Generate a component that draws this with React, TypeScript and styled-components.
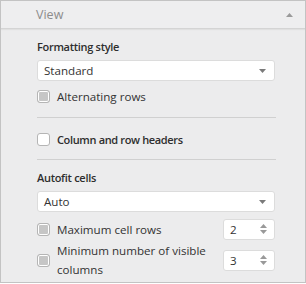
import React from "react";
import styled, { createGlobalStyle } from "styled-components";

const Global = createGlobalStyle`
  html, body { margin: 0; padding: 0; background: #fff; }
  body { font-family: "Open Sans", "Noto Sans", sans-serif; font-size: 11.6px; color: #333; }
`;

const Panel = styled.div`
  width: 306px;
  height: 283px;
  box-sizing: border-box;
  border: 1px solid #c3c3c3;
  background: #ececed;
  display: flex;
  flex-direction: column;
  overflow: hidden;
`;

const Header = styled.div`
  flex: none;
  height: 28px;
  box-sizing: border-box;
  display: flex;
  align-items: center;
  justify-content: space-between;
  padding: 0 12px 0 35px;
  border-bottom: 1px solid #d4d4d4;
  box-shadow: 0 1px 1px rgba(0, 0, 0, 0.05);
  background: #eeeeef;
  color: #8c8c8c;
  font-size: 12.5px;
`;

const Body = styled.div`
  padding: 8px 30px 0 36px;
  display: flex;
  flex-direction: column;
`;

const Section = styled.div<{ $pt?: number; $pb?: number }>`
  display: flex;
  flex-direction: column;
  padding: ${(p) => `${p.$pt ?? 0}px 0 ${p.$pb ?? 0}px`};
`;

const Title = styled.div`
  font-weight: 600;
  font-size: 11px;
  letter-spacing: -0.3px;
  height: 20px;
  line-height: 20px;
  color: #2e2e2e;
`;

const Select = styled.div`
  height: 21px;
  box-sizing: border-box;
  background: #fff;
  border: 1px solid #dcdcdc;
  border-radius: 3px;
  margin-top: 3px;
  display: flex;
  align-items: center;
  justify-content: space-between;
  padding: 0 8px 0 6px;
  color: #333;
`;

const Row = styled.div<{ $h: number; $mt?: number }>`
  display: flex;
  align-items: center;
  min-height: ${(p) => p.$h}px;
  margin-top: ${(p) => p.$mt ?? 0}px;
  gap: 7px;
`;

const Check = styled.span<{ $on?: boolean }>`
  width: 13px;
  height: 13px;
  box-sizing: border-box;
  border: 1px solid #b5b5b5;
  border-radius: 3px;
  background: ${(p) => (p.$on ? "#fff" : "#c6c6c6")};
  box-shadow: inset 0 0 0 1px #fff;
  flex: none;
`;

const Label = styled.span<{ $bold?: boolean }>`
  flex: 1;
  line-height: 19px;
  color: #333;
  ${(p) =>
    p.$bold
      ? "font-weight: 600; font-size: 11px; letter-spacing: -0.35px; color: #2e2e2e;"
      : ""}
`;

const Sep = styled.div`
  height: 1px;
  background: #d0d0d0;
  margin-right: -1px;
`;

const Spin = styled.div`
  width: 52px;
  height: 21px;
  box-sizing: border-box;
  background: #fff;
  border: 1px solid #dcdcdc;
  border-radius: 3px;
  display: flex;
  align-items: center;
  justify-content: space-between;
  padding: 0 7px 0 6px;
  flex: none;
  margin-left: 1px;
`;

const Arrows = styled.span`
  display: flex;
  flex-direction: column;
  gap: 2px;
`;

const Tri = ({ up, color = "#7a7a7a" }: { up?: boolean; color?: string }) => (
  <svg width="7" height="4" viewBox="0 0 7 4">
    <path d={up ? "M3.5 0 L7 4 L0 4 Z" : "M0 0 L7 0 L3.5 4 Z"} fill={color} />
  </svg>
);

export default function App() {
  return (
    <>
      <Global />
      <Panel>
        <Header>
          <span>View</span>
          <Tri up color="#9a9a9a" />
        </Header>
        <Body>
          <Section $pb={6}>
            <Title>Formatting style</Title>
            <Select>
              <span>Standard</span>
              <Tri />
            </Select>
            <Row $h={30}>
              <Check />
              <Label>Alternating rows</Label>
            </Row>
          </Section>
          <Sep />
          <Section $pt={2} $pb={1}>
            <Row $h={38}>
              <Check $on />
              <Label $bold>Column and row headers</Label>
            </Row>
          </Section>
          <Sep />
          <Section $pt={8}>
            <Title>Autofit cells</Title>
            <Select>
              <span>Auto</span>
              <Tri />
            </Select>
            <Row $h={24} $mt={5}>
              <Check />
              <Label>Maximum cell rows</Label>
              <Spin>
                <span>2</span>
                <Arrows>
                  <Tri up color="#999" />
                  <Tri color="#999" />
                </Arrows>
              </Spin>
            </Row>
            <Row $h={38}>
              <Check />
              <Label>Minimum number of visible columns</Label>
              <Spin>
                <span>3</span>
                <Arrows>
                  <Tri up color="#999" />
                  <Tri color="#999" />
                </Arrows>
              </Spin>
            </Row>
          </Section>
        </Body>
      </Panel>
    </>
  );
}
